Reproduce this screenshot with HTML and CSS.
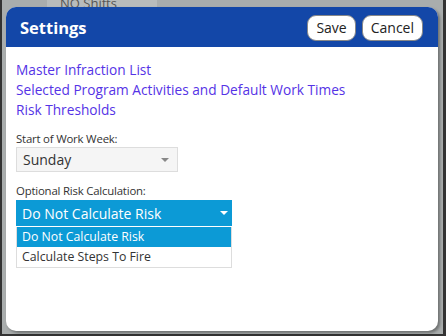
FILE: index.html
```html
<!DOCTYPE html>
<html lang="en">
<head>
    <meta charset="UTF-8">
    <title>Settings</title>
    <link rel="stylesheet" href="styles.css">
</head>
<body>
    <div class="backdrop">
        <div class="behind-text">NO Shifts</div>
        <div class="dialog">
            <div class="dialog-header">
                <h2 class="dialog-title">Settings</h2>
                <div class="header-buttons">
                    <button class="btn">Save</button>
                    <button class="btn">Cancel</button>
                </div>
            </div>

            <div class="dialog-body">
                <div class="links">
                    <a href="#">Master Infraction List</a>
                    <a href="#">Selected Program Activities and Default Work Times</a>
                    <a href="#">Risk Thresholds</a>
                </div>

                <div class="field field-week">
                    <label class="field-label">Start of Work Week:</label>
                    <div class="select select-week">
                        <span>Sunday</span>
                        <span class="caret"></span>
                    </div>
                </div>

                <div class="field field-risk">
                    <label class="field-label">Optional Risk Calculation:</label>
                    <div class="select select-risk open">
                        <span>Do Not Calculate Risk</span>
                        <span class="caret"></span>
                    </div>
                    <ul class="options">
                        <li class="selected">Do Not Calculate Risk</li>
                        <li>Calculate Steps To Fire</li>
                    </ul>
                </div>
            </div>
        </div>
    </div>
</body>
</html>
```

FILE: styles.css
```css
html, body {
    margin: 0;
    padding: 0;
    height: 100%;
}

body {
    font-family: 'Open Sans', 'Noto Sans', sans-serif;
    background-color: #333;
    box-sizing: border-box;
    padding: 0 3px 2px 2px;
}

.backdrop {
    position: relative;
    background-color: #a9adad;
    height: 100%;
    box-sizing: border-box;
    padding: 7px 5px 3px 4px;
}

/* texte de la page derriere la fenetre */
.behind-text {
    position: absolute;
    top: -4px;
    left: 45px;
    width: 110px;
    padding-left: 13px;
    box-sizing: border-box;
    background-color: #b8bcbc;
    font-size: 13px;
    line-height: 15px;
    color: #555;
}

.dialog {
    position: relative;
    background-color: white;
    border-radius: 10px;
    height: 100%;
    overflow: hidden;
    box-shadow: 2px 2px 3px rgba(0, 0, 0, 0.35);
}

.dialog-header {
    background-color: #1347a8;
    height: 40px;
    display: flex;
    align-items: center;
    justify-content: space-between;
    padding: 0 15px 0 14px;
}

.dialog-title {
    margin: 0;
    color: white;
    font-family: 'Open Sans', sans-serif;
    font-size: 16.5px;
    font-weight: bold;
}

.header-buttons {
    display: flex;
    gap: 6px;
}

.btn {
    background-color: white;
    border: 1px solid #888;
    border-radius: 9px;
    font-family: 'Open Sans', sans-serif;
    font-size: 14px;
    color: #222;
    height: 26px;
    padding: 0 8px;
    margin-top: 1px;
}

.dialog-body {
    padding: 13px 10px 0 10px;
}

.links {
    display: flex;
    flex-direction: column;
}

.links a {
    color: #5533e6;
    text-decoration: none;
    font-size: 13.7px;
    line-height: 20px;
}

.field-week {
    margin-top: 12px;
}

.field-risk {
    margin-top: 12px;
}

.field-label {
    display: block;
    font-size: 11.4px;
    color: #333;
    line-height: 14px;
    letter-spacing: -0.2px;
}

.select {
    display: flex;
    align-items: center;
    justify-content: space-between;
    box-sizing: border-box;
    font-size: 14px;
}

.select-week {
    width: 162px;
    height: 25px;
    background-color: #f5f5f5;
    border: 1px solid #ddd;
    color: #333;
    padding: 0 8px 0 6px;
    margin-top: 1px;
}

.select-week .caret {
    border-top-color: #888;
}

.select-risk {
    width: 216px;
    height: 26px;
    background-color: #0c9ad6;
    color: white;
    padding: 0 4px 0 6px;
    margin-top: 2px;
}

.caret {
    width: 0;
    height: 0;
    border-left: 4px solid transparent;
    border-right: 4px solid transparent;
    border-top: 4px solid white;
}

.options {
    list-style: none;
    margin: 1px 0 0 0;
    padding: 0;
    width: 216px;
    box-sizing: border-box;
    border: 1px solid #ddd;
    border-top: none;
    font-size: 12.3px;
    color: #333;
}

.options li {
    height: 20px;
    line-height: 20px;
    padding-left: 5px;
}

.options li.selected {
    background-color: #0c9ad6;
    color: white;
}
```
